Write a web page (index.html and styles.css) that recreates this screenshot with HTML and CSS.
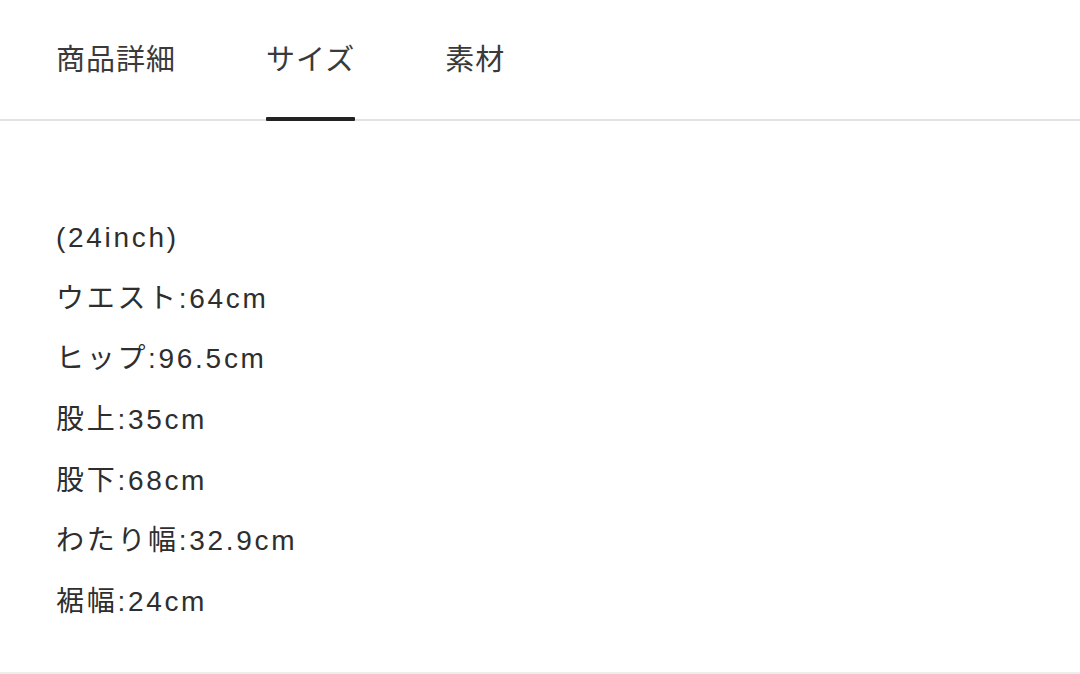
FILE: index.html
```html
<!DOCTYPE html>
<html lang="ja">
<head>
<meta charset="utf-8">
<link rel="stylesheet" href="styles.css">
</head>
<body>
<div class="page">
  <nav class="tabs">
    <div class="tab">商品詳細</div>
    <div class="tab active">サイズ</div>
    <div class="tab">素材</div>
  </nav>
  <section class="content">
    <p class="line">(24inch)</p>
    <p class="line">ウエスト:64cm</p>
    <p class="line">ヒップ:96.5cm</p>
    <p class="line">股上:35cm</p>
    <p class="line">股下:68cm</p>
    <p class="line">わたり幅:32.9cm</p>
    <p class="line">裾幅:24cm</p>
  </section>
</div>
</body>
</html>
```
FILE: styles.css
```css
html, body {
  margin: 0;
  padding: 0;
  background: #ffffff;
}
body {
  font-family: "Liberation Sans", "Noto Sans CJK JP", sans-serif;
  color: #333333;
}
.page {
  width: 1080px;
  height: 674px;
  box-sizing: border-box;
  border-bottom: 2px solid #ededed;
  display: flex;
  flex-direction: column;
}
.tabs {
  display: flex;
  gap: 90px;
  padding-left: 56px;
  height: 121px;
  box-sizing: border-box;
  border-bottom: 2px solid #e3e3e3;
}
.tab {
  font-size: 29px;
  color: #3a3a3a;
  height: 121px;
  box-sizing: border-box;
  padding-top: 40px;
  line-height: 40px;
  letter-spacing: 1px;
  position: relative;
}
.tab.active::after {
  content: "";
  position: absolute;
  left: 0;
  right: 0;
  bottom: 0;
  height: 4px;
  background: #222222;
  border-radius: 1px;
}
.content {
  padding: 87px 0 0 56px;
}
.line {
  margin: 0;
  font-size: 28px;
  letter-spacing: 2.7px;
  line-height: 60.7px;
  height: 60.7px;
  color: #2e2e2e;
}
```
